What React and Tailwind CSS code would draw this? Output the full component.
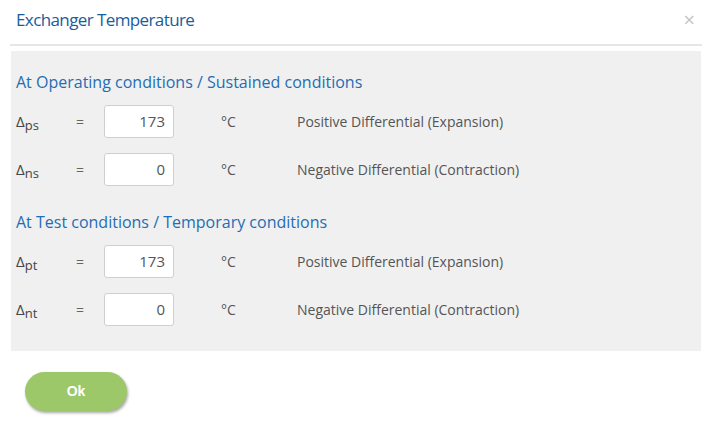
import React, { useState } from 'react';

const sections = [
  {
    title: 'At Operating conditions / Sustained conditions',
    rows: [
      { sub: 'ps', value: '173', desc: 'Positive Differential (Expansion)' },
      { sub: 'ns', value: '0', desc: 'Negative Differential (Contraction)' },
    ],
  },
  {
    title: 'At Test conditions / Temporary conditions',
    rows: [
      { sub: 'pt', value: '173', desc: 'Positive Differential (Expansion)' },
      { sub: 'nt', value: '0', desc: 'Negative Differential (Contraction)' },
    ],
  },
];

function Row({ sub, value, desc }) {
  const [val, setVal] = useState(value);
  return (
    <div className="flex items-center h-[48px] text-[14px] text-[#555]">
      <div className="w-[60px] flex items-baseline text-[#444]">
        <span className="text-[15px]">Δ</span>
        <span className="text-[13px] relative top-[3px]">{sub}</span>
      </div>
      <div className="w-[28px] text-[#666]">=</div>
      <input
        value={val}
        onChange={(e) => setVal(e.target.value)}
        className="w-[70px] h-[33px] bg-white border border-[#cfcfcf] rounded-[3px] px-[8px] text-right text-[15px] text-[#555] focus:outline-none"
      />
      <div className="w-[123px] pl-[47px]">°C</div>
      <div>{desc}</div>
    </div>
  );
}

export default function App() {
  return (
    <div className="w-[712px] h-[426px] bg-white font-['Open_Sans',sans-serif] overflow-hidden">
      <div className="flex items-center justify-between h-[38px] pl-[16px] pr-[17px] pt-[1px]">
        <h1 className="text-[17px] text-[#1a5c9c] tracking-[-0.6px]">Exchanger Temperature</h1>
        <span className="text-[#c5c5c5] text-[20px] leading-none">×</span>
      </div>
      <div className="mx-[10px] mt-[6px] h-[2px] bg-[#e6e6e6]"></div>
      <div className="mx-[11px] mt-[5px] h-[300px] bg-[#f0f0f0] pt-[20px] pl-[5px]">
        {sections.map((s, i) => (
          <div key={i} className={i > 0 ? 'mt-[18px]' : ''}>
            <h2 className="text-[16px] text-[#1f6db3] leading-[22px] mb-[4px]">{s.title}</h2>
            {s.rows.map((r) => (
              <Row key={r.sub} {...r} />
            ))}
          </div>
        ))}
      </div>
      <div className="pl-[25px] pt-[21px]">
        <button className="w-[102px] h-[39px] rounded-full bg-[#9cc869] text-white font-['Liberation_Sans',sans-serif] font-bold text-[14px] shadow-[1px_2px_3px_rgba(0,0,0,0.35)]">
          Ok
        </button>
      </div>
    </div>
  );
}
